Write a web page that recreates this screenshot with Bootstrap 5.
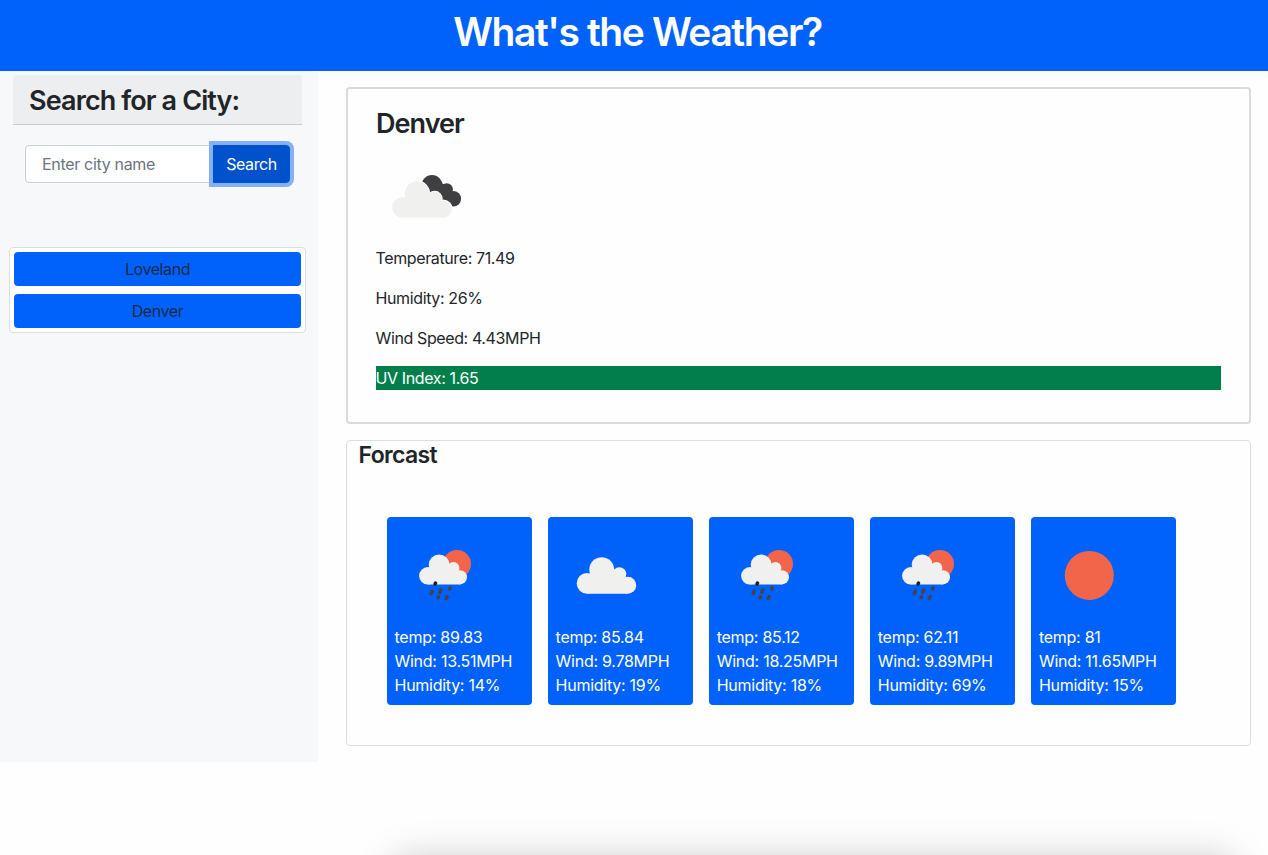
<!DOCTYPE html>
<html lang="en">
<head>
<meta charset="utf-8">
<title>What's the Weather?</title>
<link href="https://cdn.jsdelivr.net/npm/bootstrap@5.3.0/dist/css/bootstrap.min.css" rel="stylesheet">
<style>
  body { font-family: Inter, "Liberation Sans", sans-serif; font-size: 16px; color: #212529; background: #fefefe; letter-spacing: -.38px; overflow: hidden; }
  h1, h2, h3, h4 { font-weight: 600 !important; }
  .blue { background: #0062fa; }
  .page-head { height: 71px; }
  .page-head h1 { font-size: 39px; line-height: 48px; letter-spacing: -1.4px; padding-left: 7px; }
  .side { width: 318px; height: 691px; background: #f7f8fa; padding-top: 4px; }
  .search-head { margin: 0 16px 0 13px; height: 50px; background: #edeef0; border-bottom: 1px solid #c9cbcd; border-radius: 4px 4px 0 0; }
  .search-head h2 { font-size: 27px; letter-spacing: -.88px; padding-top: 3px; }
  .search-group { width: 265px; margin: 20px 0 0 25px; height: 38px; }
  .search-group .form-control { padding-left: 16px; border-color: #c9ced3; border-radius: 4px; letter-spacing: -.32px; }
  .search-group .form-control::placeholder { color: #6c757d; }
  .search-group .btn { width: 77px; padding: 6px 0; background: #0052cc; border-color: #0052cc; color: #fff; border-radius: 0 4px 4px 0; box-shadow: 0 0 0 4px #83b1f3; letter-spacing: -.4px; z-index: 5; }
  .history { margin: 64px 12px 0 9px; height: 86px; padding: 4px; border: 1px solid #dcdddf; border-radius: 4px; background: #fff; gap: 8px; }
  .history .btn { height: 34px; padding: 0; border: 0; border-radius: 4px; line-height: 34px; color: #14294a; letter-spacing: -.4px; }
  .main-col { padding: 16px 17px 0 28px; }
  .now { height: 337px; border: 2px solid #d9dadb; border-radius: 4px; padding: 18px 28px 0; background: #fefefe; }
  .now h3 { font-size: 27px; line-height: 33.6px; letter-spacing: -.95px; margin-bottom: 5px; }
  .now p { margin-bottom: 16px; text-indent: -.5px; }
  .uv { background: #007f4c; color: #fff; }
  .forecast { height: 306px; margin-top: 16px; border: 1px solid #dcdddd; border-radius: 4px; background: #fefefe; }
  .forecast h4 { font-size: 23px; line-height: 29px; letter-spacing: -.65px; padding-left: 11.5px; margin: 0; }
  .days { gap: 16px; padding: 47px 0 0 40px; }
  .day { width: 145.1px; height: 188px; padding: 8px 7.5px; border-radius: 4px; color: #fff; white-space: nowrap; letter-spacing: -.26px; }
  .wx { display: block; width: 100px; height: 100px; }
  .dock { height: 93px; overflow: hidden; }
  .dock-edge { height: 60px; margin: 97px 35px 0 394px; box-shadow: 0 0 38px rgba(0,0,0,.22); border-radius: 12px; }
</style>
<script src="https://cdn.jsdelivr.net/npm/bootstrap@5.3.0/dist/js/bootstrap.bundle.min.js"></script>
</head>
<body>
<svg width="0" height="0" class="d-none">
  <symbol id="cloud" viewBox="0 0 100 100">
    <circle cx="31" cy="58.4" r="10.3"/><circle cx="45.7" cy="44.6" r="12.4"/><circle cx="63.3" cy="49.2" r="7"/><circle cx="71.7" cy="60.2" r="8.5"/>
    <path d="M31 50L45 45L64 49L71.7 56V68.7H31Z"/>
  </symbol>
  <symbol id="rain" viewBox="0 0 100 100">
    <circle cx="62" cy="39" r="14" fill="#f3654b"/>
    <g fill="#f0f0f0">
      <circle cx="32.8" cy="50.8" r="8.7"/><circle cx="44.1" cy="39.8" r="10.4"/><circle cx="58.4" cy="43" r="6"/><circle cx="64.9" cy="52.3" r="7.1"/>
      <path d="M32.8 45L44 40L59 43L65 49V59.5H32.8Z"/>
    </g>
    <g stroke="#3d4452" stroke-width="3.6" stroke-linecap="round">
      <path d="M37.2 66.2L36.2 68.6M45.8 64.9L44.9 67.2M55.2 62.9L54.7 64M43.5 71.8L43.2 72.7M52.1 71.6L51.3 73.6"/>
      <path d="M40.5 58.1L40.1 59" stroke="#222"/>
    </g>
  </symbol>
</svg>
<header class="page-head blue text-white text-center pt-2"><h1 class="m-0">What's the Weather?</h1></header>
<div class="d-flex">
  <aside class="side flex-shrink-0">
    <div class="search-head d-flex align-items-center px-3"><h2 class="m-0">Search for a City:</h2></div>
    <div class="input-group search-group">
      <input class="form-control" type="text" placeholder="Enter city name">
      <button class="btn" type="button">Search</button>
    </div>
    <div class="history d-flex flex-column">
      <button class="btn blue w-100">Loveland</button>
      <button class="btn blue w-100">Denver</button>
    </div>
  </aside>
  <main class="main-col flex-grow-1">
    <section class="now">
      <h3>Denver</h3>
      <svg class="wx" viewBox="0 0 100 100">
        <g fill="#3f3f42"><circle cx="56" cy="39.7" r="10.6"/><circle cx="70.7" cy="43.5" r="6.2"/><circle cx="77.3" cy="52.7" r="7.8"/><path d="M56 32L71 40L78 50L75 60L52 50Z"/></g>
        <g fill="#f0f0ef">
          <g stroke="#fefefe" stroke-width="2"><circle cx="40.7" cy="47.7" r="12.4"/><circle cx="58.7" cy="52.8" r="7"/><circle cx="67" cy="63.2" r="8.8"/></g>
          <use href="#cloud" x="-4.6" y="3.1" width="100" height="100"/>
        </g>
      </svg>
      <p>Temperature: 71.49</p>
      <p>Humidity: 26%</p>
      <p>Wind Speed: 4.43MPH</p>
      <p class="uv">UV Index: 1.65</p>
    </section>
    <section class="forecast">
      <h4>Forcast</h4>
      <div class="days d-flex">
        <div class="day blue"><svg class="wx"><use href="#rain"/></svg><div>temp: 89.83</div><div>Wind: 13.51MPH</div><div>Humidity: 14%</div></div>
        <div class="day blue"><svg class="wx" fill="#f0f0ef"><use href="#cloud"/></svg><div>temp: 85.84</div><div>Wind: 9.78MPH</div><div>Humidity: 19%</div></div>
        <div class="day blue"><svg class="wx"><use href="#rain"/></svg><div>temp: 85.12</div><div>Wind: 18.25MPH</div><div>Humidity: 18%</div></div>
        <div class="day blue"><svg class="wx"><use href="#rain"/></svg><div>temp: 62.11</div><div>Wind: 9.89MPH</div><div>Humidity: 69%</div></div>
        <div class="day blue"><svg class="wx" viewBox="0 0 100 100"><circle cx="50.3" cy="50.4" r="24.5" fill="#f3654b"/></svg><div>temp: 81</div><div>Wind: 11.65MPH</div><div>Humidity: 15%</div></div>
      </div>
    </section>
  </main>
</div>
<div class="dock d-flow-root"><div class="dock-edge"></div></div>
</body>
</html>
